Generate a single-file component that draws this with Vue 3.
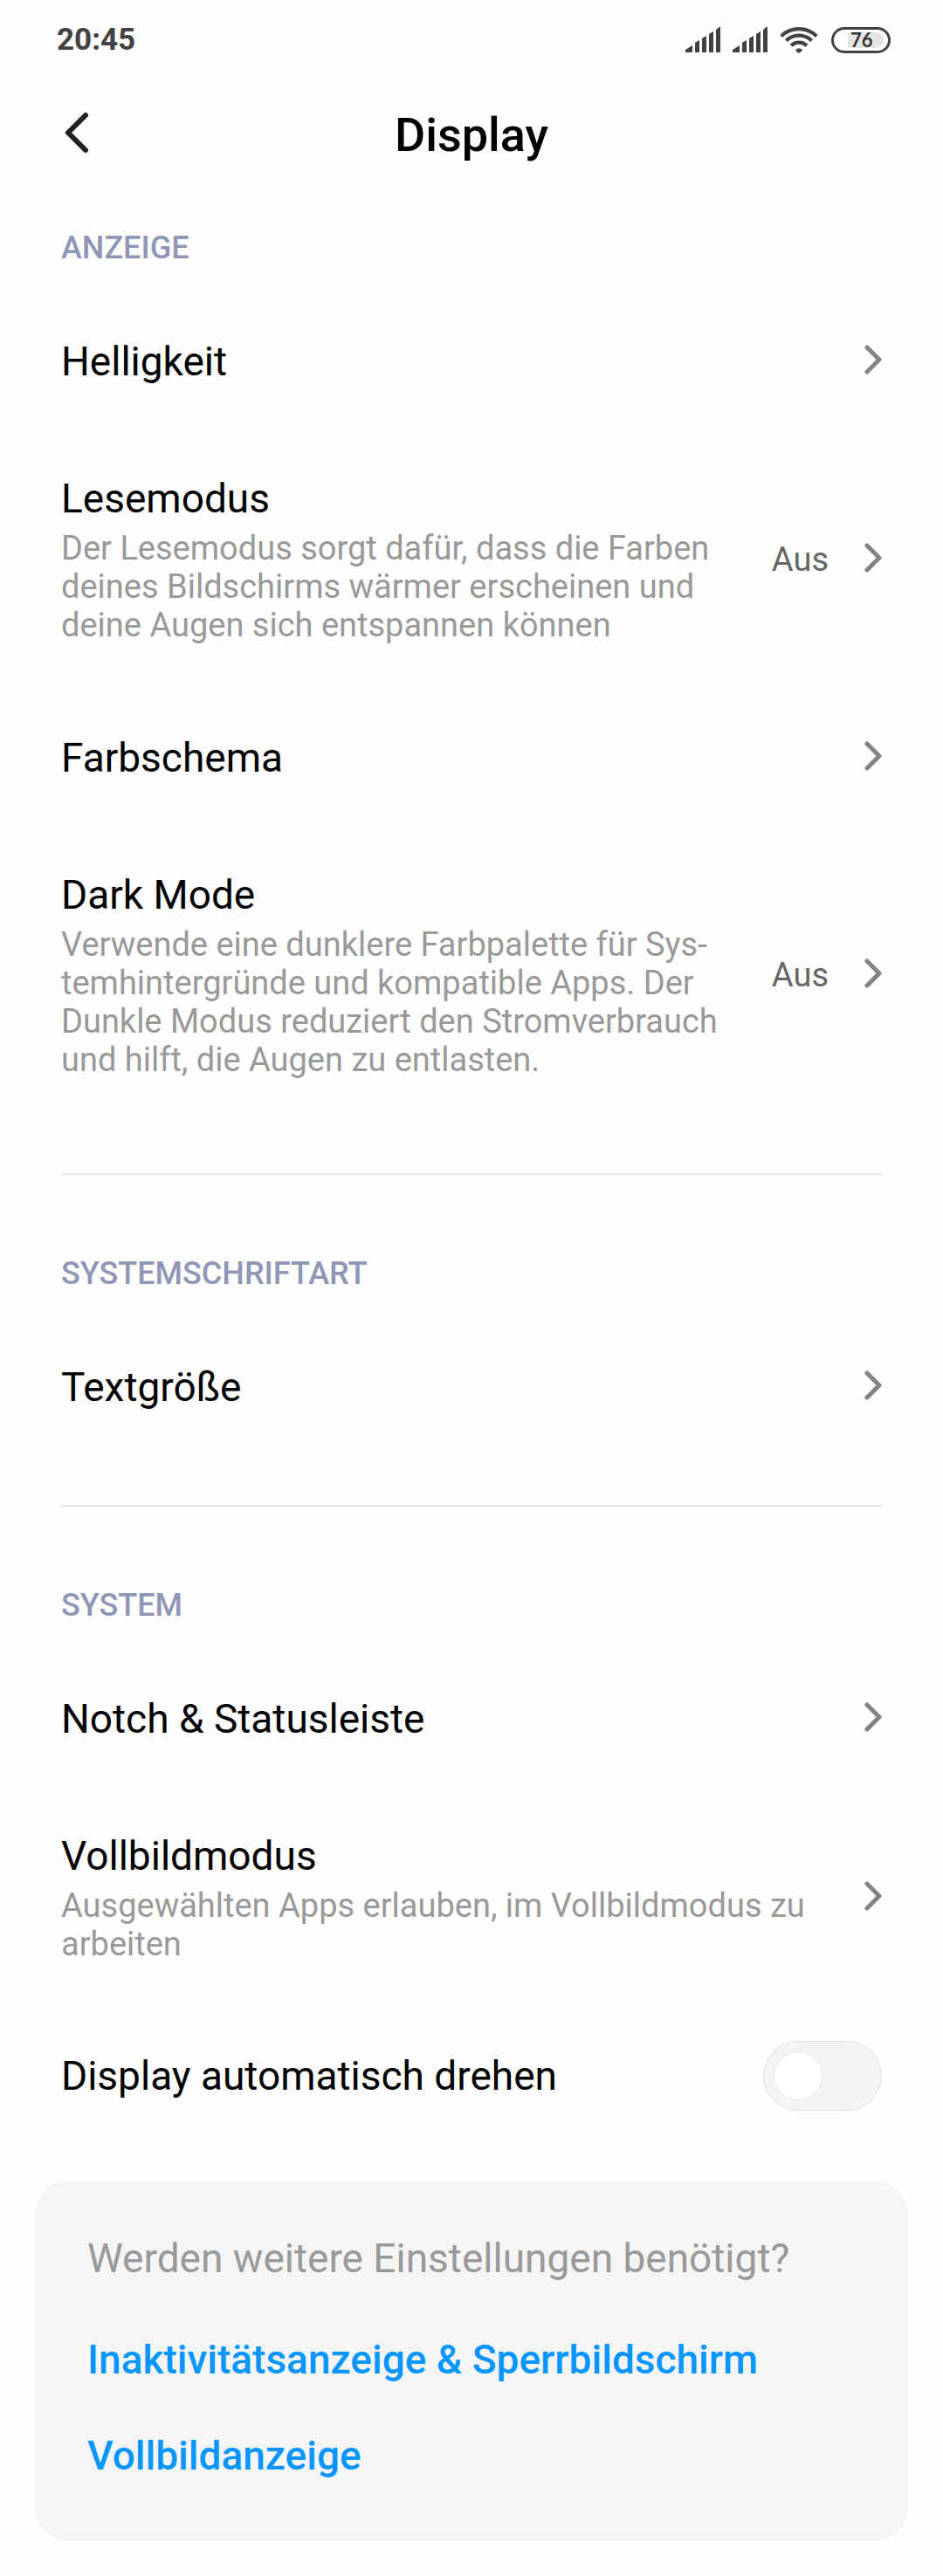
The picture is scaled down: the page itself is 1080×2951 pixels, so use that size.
<script setup>
import { ref } from 'vue';

const autoRotate = ref(false);

const sections = [
  {
    title: 'ANZEIGE',
    items: [
      { label: 'Helligkeit' },
      {
        label: 'Lesemodus',
        desc: 'Der Lesemodus sorgt dafür, dass die Farben deines Bildschirms wärmer erscheinen und deine Augen sich entspannen können',
        value: 'Aus',
      },
      { label: 'Farbschema' },
      {
        label: 'Dark Mode',
        desc: 'Verwende eine dunklere Farbpalette für Sys\u00ADtemhintergründe und kompatible Apps. Der Dunkle Modus reduziert den Stromverbrauch und hilft, die Augen zu entlasten.',
        value: 'Aus',
      },
    ],
  },
  {
    title: 'SYSTEMSCHRIFTART',
    items: [{ label: 'Textgröße' }],
  },
  {
    title: 'SYSTEM',
    items: [
      { label: 'Notch & Statusleiste' },
      {
        label: 'Vollbildmodus',
        desc: 'Ausgewählten Apps erlauben, im Vollbildmodus zu arbeiten',
      },
    ],
  },
];

const links = ['Inaktivitätsanzeige & Sperrbildschirm', 'Vollbildanzeige'];
</script>

<template>
  <div class="screen">
    <!-- Status bar -->
    <div class="status-bar">
      <span class="time">20:45</span>
      <div class="status-icons">
        <svg v-for="n in 2" :key="n" class="signal" width="40" height="30" viewBox="0 0 40 30">
          <path d="M0 29v-3l8-5v8zM11 29V18l5-3v14zM19 29V13l5-3v19zM27 29V8l5-3v24zM35 29V3l3.500-3H40v29z" />
        </svg>
        <svg class="wifi" width="44" height="30" viewBox="0 0 44 30">
          <g fill="none" stroke="#424242" stroke-width="4.200">
            <path d="M1.700 10.500a29 29 0 0 1 40.600 0" />
            <path d="M7.300 15.600a21 21 0 0 1 29.400 0" />
            <path d="M13 21.300a12.800 12.800 0 0 1 18 0" />
          </g>
          <path d="M18 26q4-3.500 8 0q-.5 2-4 4q-3.500-2-4-4z" />
        </svg>
        <div class="battery"><span class="battery-level">76</span></div>
      </div>
    </div>

    <!-- Header -->
    <header class="header">
      <button class="btn-back" aria-label="Zurück">
        <svg width="28" height="48" viewBox="0 0 28 48">
          <path d="M24 4L4 24l20 20" fill="none" stroke="#202022" stroke-width="6" stroke-linecap="round" stroke-linejoin="round" />
        </svg>
      </button>
      <h1>Display</h1>
    </header>

    <main>
      <!-- Settings -->
      <section v-for="section in sections" :key="section.title" class="section">
        <h2>{{ section.title }}</h2>
        <button v-for="item in section.items" :key="item.label" class="row">
          <span class="row-text">
            <span class="row-label">{{ item.label }}</span>
            <span v-if="item.desc" class="row-desc">{{ item.desc }}</span>
          </span>
          <span v-if="item.value" class="row-value">{{ item.value }}</span>
          <svg class="chevron" width="20" height="40" viewBox="0 0 20 40">
            <path d="M3 4l14 14L3 32" fill="none" stroke="#838383" stroke-width="5" stroke-linecap="round" stroke-linejoin="round" />
          </svg>
        </button>
      </section>

      <div class="row row-toggle">
        <label for="auto-rotate" class="row-text row-label">Display automatisch drehen</label>
        <input id="auto-rotate" v-model="autoRotate" type="checkbox" class="toggle" />
      </div>

      <!-- Related settings -->
      <aside class="card">
        <p>Werden weitere Einstellungen benötigt?</p>
        <a v-for="link in links" :key="link" href="#">{{ link }}</a>
      </aside>
    </main>
  </div>
</template>

<style>
body {
  margin: 0;
  background: #fefefe;
}
</style>

<style scoped>
.screen {
  font-family: Roboto, "Liberation Sans", sans-serif;
  color: #000;
  padding-bottom: 40px;
}

button {
  font: inherit;
  color: inherit;
  background: none;
  border: none;
  padding: 0;
  text-align: left;
  cursor: pointer;
}

svg {
  display: block;
  flex-shrink: 0;
}

/* Status bar */
.status-bar {
  display: flex;
  justify-content: space-between;
  align-items: center;
  height: 92px;
  padding: 0 60px 0 65px;
}

.time {
  font-size: 35px;
  line-height: 40px;
  font-weight: 700;
  color: #424242;
}

.status-icons {
  display: flex;
  align-items: center;
  fill: #424242;
}

.signal {
  margin-right: 14px;
}

.wifi {
  margin-right: 15px;
}

.battery {
  box-sizing: border-box;
  width: 68px;
  height: 30px;
  padding: 3px 5px 3px 16px;
  border: 3px solid #424242;
  border-radius: 15px;
}

.battery-level {
  display: block;
  height: 18px;
  padding-left: 3px;
  border-radius: 2px 9px 9px 2px;
  background: #e4e6e5;
  color: #333;
  font-family: Lato, sans-serif;
  font-size: 22px;
  line-height: 18px;
  font-weight: 700;
}

/* Header */
.header {
  position: relative;
  display: flex;
  justify-content: center;
  align-items: center;
  padding: 31px 70px 0;
}

.btn-back {
  position: absolute;
  left: 74px;
  bottom: 11px;
}

h1 {
  margin: 0;
  font-size: 54px;
  line-height: 64px;
  font-weight: 500;
}

/* Sections */
.section {
  margin: 0 70px;
  padding-top: 76px;
}

.section + .section {
  margin-top: 57px;
  padding-top: 92px;
  border-top: 2px solid #e6e6e6;
}

h2 {
  margin: 0 0 30px;
  font-size: 36px;
  line-height: 42px;
  font-weight: 500;
  color: #9096b5;
}

.row {
  display: flex;
  align-items: center;
  width: 100%;
  padding: 52px 0 51px;
}

.row-text {
  flex: 1;
}

.row-label {
  display: block;
  font-size: 46px;
  line-height: 54px;
}

.row-desc {
  display: block;
  margin-top: 8px;
  font-size: 38px;
  line-height: 44px;
  color: #999;
}

.row-value {
  margin-left: 50px;
  font-size: 38px;
  line-height: 44px;
  color: #666;
}

.chevron {
  margin-left: 41px;
}

.row-toggle {
  width: auto;
  margin: 0 70px;
  padding: 38px 0 40px;
}

.toggle {
  appearance: none;
  box-sizing: border-box;
  width: 136px;
  height: 80px;
  margin: 0;
  padding: 11px;
  border: 1px solid #e0e0e0;
  border-radius: 40px;
  background: #f4f4f4;
  cursor: pointer;
}

.toggle::before {
  content: "";
  display: block;
  box-sizing: border-box;
  width: 56px;
  height: 56px;
  border: 1px solid #e6e6e6;
  border-radius: 50%;
  background: #fff;
}

.toggle:checked {
  background: #0d94ff;
}

.toggle:checked::before {
  margin-left: auto;
}

/* Card */
.card {
  display: flex;
  flex-direction: column;
  align-items: flex-start;
  gap: 56px;
  margin: 40px 40px 0;
  padding: 62px 60px 71px;
  border-radius: 38px;
  background: #f5f5f5;
  font-size: 46px;
  line-height: 54px;
}

.card p {
  margin: 0 0 6px;
  color: #999;
}

.card a {
  color: #0796ff;
  font-weight: 500;
  text-decoration: none;
}
</style>
